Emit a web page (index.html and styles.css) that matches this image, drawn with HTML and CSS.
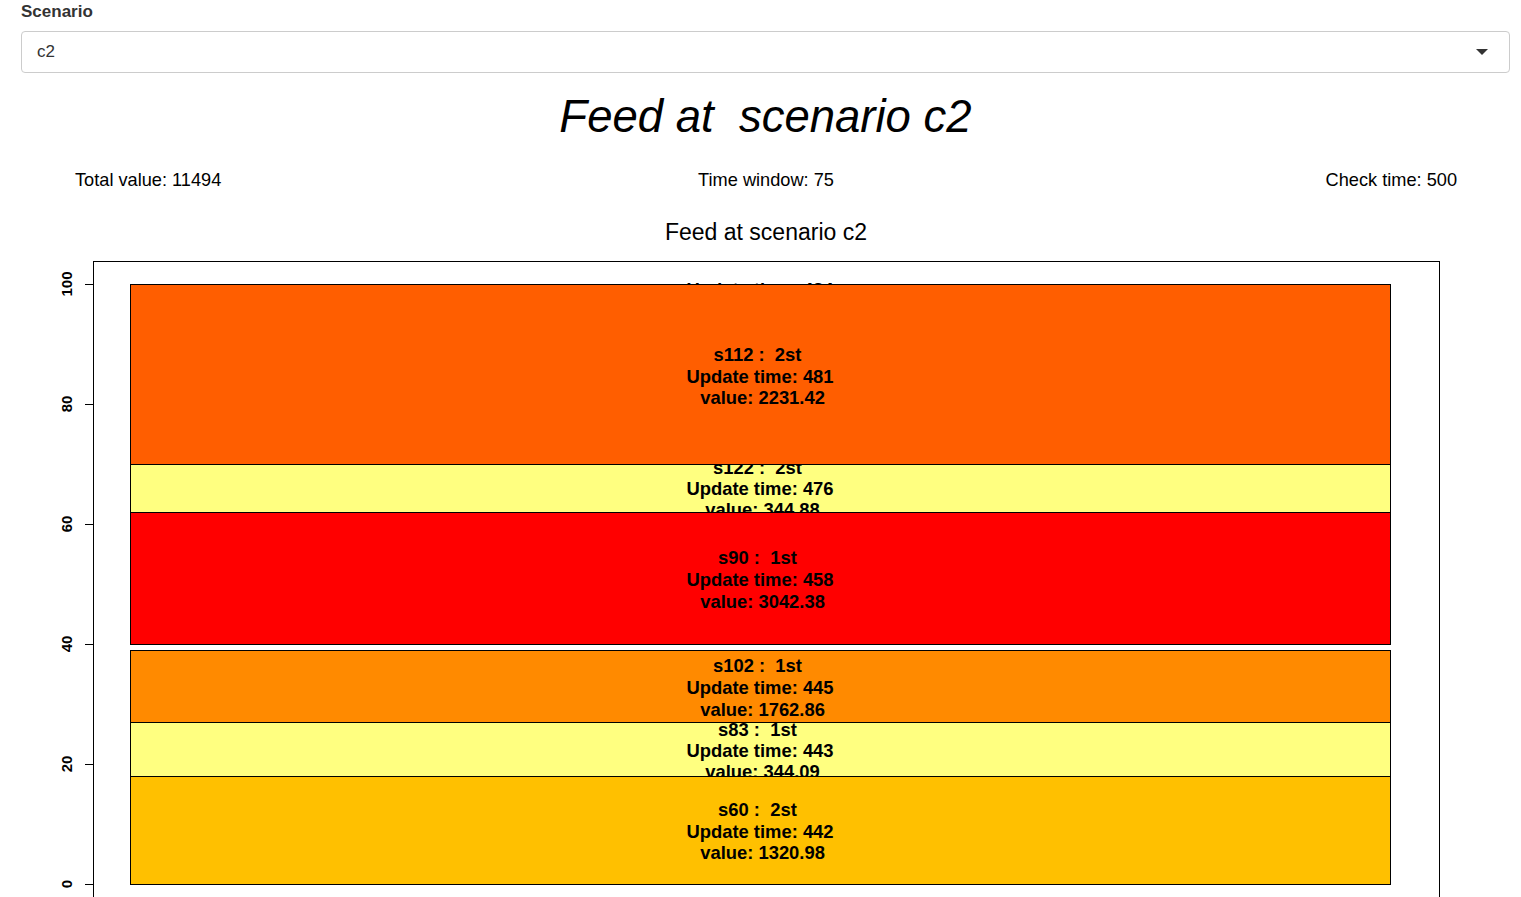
FILE: index.html
```html
<!DOCTYPE html>
<html lang="en">
<head>
<meta charset="utf-8">
<title>Feed at scenario c2</title>
<link rel="stylesheet" href="styles.css">
</head>
<body>
<div class="page">
  <div class="field">
    <label class="field-label">Scenario</label>
    <div class="select">
      <span class="select-value">c2</span>
      <svg class="caret" width="12" height="6" viewBox="0 0 12 6"><path d="M0 0 L12 0 L6 6 Z"/></svg>
    </div>
  </div>

  <h2 class="main-title">Feed at&nbsp; scenario c2</h2>

  <div class="stats">
    <span class="stat stat-left">Total value: 11494</span>
    <span class="stat stat-center">Time window: 75</span>
    <span class="stat stat-right">Check time: 500</span>
  </div>

  <svg class="plot" width="1489" height="698" viewBox="21 199 1489 698" xmlns="http://www.w3.org/2000/svg">
    <defs>
      <clipPath id="clip-top"><rect x="0" y="276" width="1521" height="8"/></clipPath>
      <clipPath id="clip1"><rect x="130" y="284" width="1261" height="180"/></clipPath>
      <clipPath id="clip2"><rect x="130" y="464" width="1261" height="48"/></clipPath>
      <clipPath id="clip3"><rect x="130" y="512" width="1261" height="132"/></clipPath>
      <clipPath id="clip4"><rect x="130" y="650" width="1261" height="72"/></clipPath>
      <clipPath id="clip5"><rect x="130" y="722" width="1261" height="54"/></clipPath>
      <clipPath id="clip6"><rect x="130" y="776" width="1261" height="108"/></clipPath>
    </defs>

    <text class="plot-title" x="766" y="240">Feed at scenario c2</text>

    <rect class="frame" x="93.5" y="261.5" width="1346" height="700"/>

    <g class="ticks">
      <line x1="85" y1="284.5" x2="93" y2="284.5"/>
      <line x1="85" y1="404.5" x2="93" y2="404.5"/>
      <line x1="85" y1="524.5" x2="93" y2="524.5"/>
      <line x1="85" y1="644.5" x2="93" y2="644.5"/>
      <line x1="85" y1="764.5" x2="93" y2="764.5"/>
      <line x1="85" y1="884.5" x2="93" y2="884.5"/>
    </g>
    <g class="tick-labels">
      <text x="72" y="284" transform="rotate(-90 72 284)">100</text>
      <text x="72" y="404" transform="rotate(-90 72 404)">80</text>
      <text x="72" y="524" transform="rotate(-90 72 524)">60</text>
      <text x="72" y="644" transform="rotate(-90 72 644)">40</text>
      <text x="72" y="764" transform="rotate(-90 72 764)">20</text>
      <text x="72" y="884" transform="rotate(-90 72 884)">0</text>
    </g>

    <g clip-path="url(#clip-top)" class="bar-label">
      <text x="760" y="295.5">Update time: 484</text>
    </g>

    <rect class="bar" x="130.5" y="284.5" width="1260" height="180" fill="#ff5e00"/>
    <g clip-path="url(#clip1)" class="bar-label">
      <text x="760" y="361">s112 :&#160; 2st&#160;</text>
      <text x="760" y="382.5">Update time: 481</text>
      <text x="760" y="404">&#160;value: 2231.42</text>
    </g>

    <rect class="bar" x="130.5" y="464.5" width="1260" height="48" fill="#ffff80"/>
    <g clip-path="url(#clip2)" class="bar-label">
      <text x="760" y="473.5">s122 :&#160; 2st&#160;</text>
      <text x="760" y="495">Update time: 476</text>
      <text x="760" y="516">&#160;value: 344.88</text>
    </g>

    <rect class="bar" x="130.5" y="512.5" width="1260" height="132" fill="#ff0000"/>
    <g clip-path="url(#clip3)" class="bar-label">
      <text x="760" y="564">s90 :&#160; 1st&#160;</text>
      <text x="760" y="586">Update time: 458</text>
      <text x="760" y="608">&#160;value: 3042.38</text>
    </g>

    <rect class="bar" x="130.5" y="650.5" width="1260" height="72" fill="#ff8a00"/>
    <g clip-path="url(#clip4)" class="bar-label">
      <text x="760" y="672">s102 :&#160; 1st&#160;</text>
      <text x="760" y="694">Update time: 445</text>
      <text x="760" y="716">&#160;value: 1762.86</text>
    </g>

    <rect class="bar" x="130.5" y="722.5" width="1260" height="54" fill="#ffff80"/>
    <g clip-path="url(#clip5)" class="bar-label">
      <text x="760" y="735.5">s83 :&#160; 1st&#160;</text>
      <text x="760" y="756.5">Update time: 443</text>
      <text x="760" y="778">&#160;value: 344.09</text>
    </g>

    <rect class="bar" x="130.5" y="776.5" width="1260" height="108" fill="#ffc000"/>
    <g clip-path="url(#clip6)" class="bar-label">
      <text x="760" y="816">s60 :&#160; 2st&#160;</text>
      <text x="760" y="838">Update time: 442</text>
      <text x="760" y="859">&#160;value: 1320.98</text>
    </g>
  </svg>
</div>
</body>
</html>
```

FILE: styles.css
```css
html, body {
  margin: 0;
  padding: 0;
  background: #ffffff;
}

body {
  font-family: "Liberation Sans", Arial, Helvetica, sans-serif;
  color: #333333;
}

.page {
  padding: 0 11px 0 21px;
  height: 897px;
  overflow: hidden;
}

.field {
  display: flex;
  flex-direction: column;
}

.field-label {
  font-size: 17px;
  font-weight: bold;
  line-height: 24px;
  height: 24px;
  margin-bottom: 7px;
  color: #333333;
}

.select {
  box-sizing: border-box;
  height: 42px;
  border: 1px solid #cccccc;
  border-radius: 4px;
  background: #ffffff;
  display: flex;
  align-items: center;
  justify-content: space-between;
  padding: 0 21px 0 15px;
}

.select-value {
  font-size: 17px;
  color: #333333;
}

.caret path {
  fill: #333333;
}

.main-title {
  margin: 0;
  height: 88px;
  line-height: 88px;
  text-align: center;
  font-size: 45.5px;
  font-style: italic;
  font-weight: normal;
  color: #000000;
}

.stats {
  display: grid;
  grid-template-columns: 1fr auto 1fr;
  height: 38px;
  line-height: 38px;
  padding: 0 53px 0 54px;
  font-size: 18.2px;
  color: #000000;
}

.stat-left { justify-self: start; }
.stat-center { justify-self: center; }
.stat-right { justify-self: end; }

.plot {
  display: block;
}

.plot-title {
  font-family: "Liberation Sans", Arial, sans-serif;
  font-size: 23px;
  text-anchor: middle;
  fill: #000000;
}

.frame {
  fill: none;
  stroke: #000000;
  stroke-width: 1;
}

.ticks line {
  stroke: #000000;
  stroke-width: 1;
}

.tick-labels text {
  font-family: "Liberation Sans", Arial, sans-serif;
  font-size: 15px;
  font-weight: bold;
  text-anchor: middle;
  fill: #000000;
}

.bar {
  stroke: #000000;
  stroke-width: 1;
}

.bar-label {
  font-family: "Liberation Sans", Arial, sans-serif;
  font-size: 18.4px;
  font-weight: bold;
  text-anchor: middle;
  fill: #000000;
}
```
